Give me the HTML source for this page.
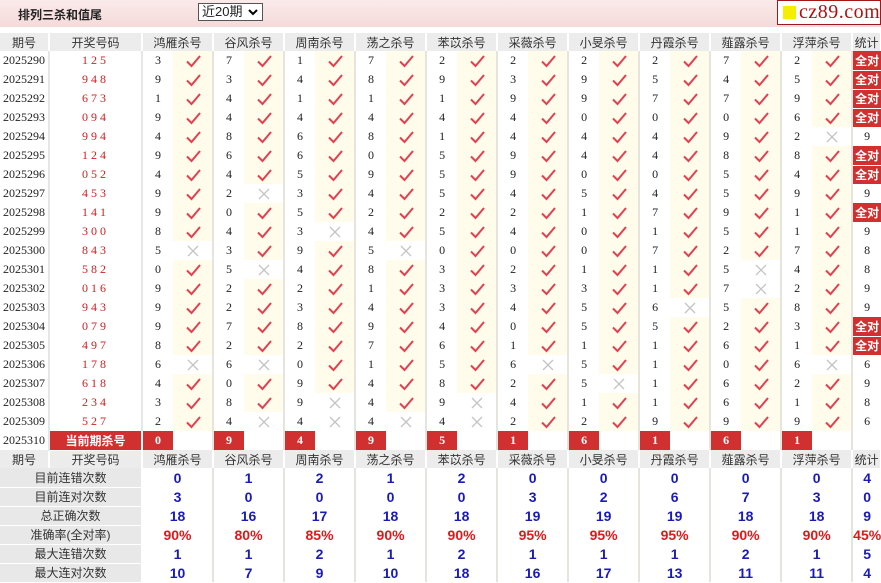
<!DOCTYPE html>
<html><head><meta charset="utf-8">
<style>
*{margin:0;padding:0;box-sizing:border-box}
body{width:881px;height:581px;overflow:hidden;background:#fff;font-family:"Liberation Sans","Noto Sans CJK SC",sans-serif;font-size:12px;color:#222;position:relative}
.top{position:absolute;left:0;top:0;width:881px;height:27px;background:linear-gradient(#fbeaea,#f5dada);}
.ttl{position:absolute;left:18px;top:6px;font-weight:bold;font-size:12px;color:#222}
.sel{position:absolute;left:198px;top:3px;width:65px;height:18px;border:1px solid #555;background:#fff;font-size:13px;line-height:16px;padding-left:3px}
.sel svg{position:absolute;right:4px;top:5px}
.logo{position:absolute;left:777px;top:0;width:104px;height:25px;border:1px solid #a01818;background:#fff;}
.logo i{position:absolute;left:5px;top:5px;width:13px;height:13px;background:#f5ee00}
.logo b{position:absolute;left:21px;top:0;font-family:"Liberation Serif",serif;font-weight:normal;font-size:20px;color:#b01010;letter-spacing:0.5px}
table{position:absolute;left:0;top:33px;border-collapse:collapse;table-layout:fixed;width:881px}
td{height:19px;padding:0;text-align:center;vertical-align:middle;white-space:nowrap;overflow:hidden}
tr.h td{height:18px;background:#ececec;color:#333;border-right:2px solid #fff}
td.p{font-family:"Liberation Serif",serif;font-size:12px;border-right:2px solid #e6e6e6}
td.d{color:#d02020;font-family:"Liberation Serif",serif;letter-spacing:3px;border-right:2px solid #e6e6e6}
td.n{font-family:"Liberation Serif",serif}
td.k{background:#fffcec;border-right:2px solid #e6e4dc}
td.x{background:#fff;border-right:2px solid #e6e4dc}
td.k svg,td.x svg{display:block;margin:0 auto}
td.s{font-family:"Liberation Serif",serif}
td.a{background:#d0302f;color:#fff;font-weight:bold;border-bottom:1px solid #fff}
td.r{background:#d0302f;color:#fff;font-weight:bold;font-family:"Liberation Serif",serif}
td.w{border-right:2px solid #e6e4dc}
td.lab{background:#e8e8e8;color:#333;border-right:2px solid #fff;border-bottom:1px solid #fff}
td.v{color:#1a1ab8;font-weight:bold;font-size:14px;border-right:2px solid #e6e4dc}
td.pc{color:#e01818;font-weight:bold;font-size:14px;border-right:2px solid #e6e4dc}
</style></head><body>
<svg width="0" height="0" style="position:absolute"><defs>
<g id="c"><path d="M2 8.5 L6.5 13 L15 3" fill="none" stroke="#e2404f" stroke-width="2"/></g>
<g id="x"><path d="M3 3 L13 13 M13 3 L3 13" fill="none" stroke="#c4c4c4" stroke-width="1.3"/></g>
</defs></svg>
<div class="top"></div>
<div class="ttl">排列三杀和值尾</div>
<div class="sel">近20期<svg width="10" height="8"><path d="M1 1 L5 5 L9 1" fill="none" stroke="#000" stroke-width="2"/></svg></div>
<div class="logo"><i></i><b>cz89.com</b></div>
<table>
<colgroup><col style="width:49px"><col style="width:93px">
<col style="width:31px"><col style="width:40px"><col style="width:31px"><col style="width:40px"><col style="width:31px"><col style="width:40px"><col style="width:31px"><col style="width:40px"><col style="width:31px"><col style="width:40px"><col style="width:31px"><col style="width:40px"><col style="width:31px"><col style="width:40px"><col style="width:31px"><col style="width:40px"><col style="width:31px"><col style="width:40px"><col style="width:31px"><col style="width:40px">
<col style="width:29px"></colgroup>
<tr class="h"><td>期号</td><td>开奖号码</td><td colspan="2">鸿雁杀号</td><td colspan="2">谷风杀号</td><td colspan="2">周南杀号</td><td colspan="2">荡之杀号</td><td colspan="2">苯苡杀号</td><td colspan="2">采薇杀号</td><td colspan="2">小旻杀号</td><td colspan="2">丹霞杀号</td><td colspan="2">薤露杀号</td><td colspan="2">浮萍杀号</td><td>统计</td></tr>
<tr><td class="p">2025290</td><td class="d">125</td><td class="n">3</td><td class="k"><svg width="16" height="16"><use href="#c"/></svg></td><td class="n">7</td><td class="k"><svg width="16" height="16"><use href="#c"/></svg></td><td class="n">1</td><td class="k"><svg width="16" height="16"><use href="#c"/></svg></td><td class="n">7</td><td class="k"><svg width="16" height="16"><use href="#c"/></svg></td><td class="n">2</td><td class="k"><svg width="16" height="16"><use href="#c"/></svg></td><td class="n">2</td><td class="k"><svg width="16" height="16"><use href="#c"/></svg></td><td class="n">2</td><td class="k"><svg width="16" height="16"><use href="#c"/></svg></td><td class="n">2</td><td class="k"><svg width="16" height="16"><use href="#c"/></svg></td><td class="n">7</td><td class="k"><svg width="16" height="16"><use href="#c"/></svg></td><td class="n">2</td><td class="k"><svg width="16" height="16"><use href="#c"/></svg></td><td class="a">全对</td></tr>
<tr><td class="p">2025291</td><td class="d">948</td><td class="n">9</td><td class="k"><svg width="16" height="16"><use href="#c"/></svg></td><td class="n">3</td><td class="k"><svg width="16" height="16"><use href="#c"/></svg></td><td class="n">4</td><td class="k"><svg width="16" height="16"><use href="#c"/></svg></td><td class="n">8</td><td class="k"><svg width="16" height="16"><use href="#c"/></svg></td><td class="n">9</td><td class="k"><svg width="16" height="16"><use href="#c"/></svg></td><td class="n">3</td><td class="k"><svg width="16" height="16"><use href="#c"/></svg></td><td class="n">9</td><td class="k"><svg width="16" height="16"><use href="#c"/></svg></td><td class="n">5</td><td class="k"><svg width="16" height="16"><use href="#c"/></svg></td><td class="n">4</td><td class="k"><svg width="16" height="16"><use href="#c"/></svg></td><td class="n">5</td><td class="k"><svg width="16" height="16"><use href="#c"/></svg></td><td class="a">全对</td></tr>
<tr><td class="p">2025292</td><td class="d">673</td><td class="n">1</td><td class="k"><svg width="16" height="16"><use href="#c"/></svg></td><td class="n">4</td><td class="k"><svg width="16" height="16"><use href="#c"/></svg></td><td class="n">1</td><td class="k"><svg width="16" height="16"><use href="#c"/></svg></td><td class="n">1</td><td class="k"><svg width="16" height="16"><use href="#c"/></svg></td><td class="n">1</td><td class="k"><svg width="16" height="16"><use href="#c"/></svg></td><td class="n">9</td><td class="k"><svg width="16" height="16"><use href="#c"/></svg></td><td class="n">9</td><td class="k"><svg width="16" height="16"><use href="#c"/></svg></td><td class="n">7</td><td class="k"><svg width="16" height="16"><use href="#c"/></svg></td><td class="n">7</td><td class="k"><svg width="16" height="16"><use href="#c"/></svg></td><td class="n">9</td><td class="k"><svg width="16" height="16"><use href="#c"/></svg></td><td class="a">全对</td></tr>
<tr><td class="p">2025293</td><td class="d">094</td><td class="n">9</td><td class="k"><svg width="16" height="16"><use href="#c"/></svg></td><td class="n">4</td><td class="k"><svg width="16" height="16"><use href="#c"/></svg></td><td class="n">4</td><td class="k"><svg width="16" height="16"><use href="#c"/></svg></td><td class="n">4</td><td class="k"><svg width="16" height="16"><use href="#c"/></svg></td><td class="n">4</td><td class="k"><svg width="16" height="16"><use href="#c"/></svg></td><td class="n">4</td><td class="k"><svg width="16" height="16"><use href="#c"/></svg></td><td class="n">0</td><td class="k"><svg width="16" height="16"><use href="#c"/></svg></td><td class="n">0</td><td class="k"><svg width="16" height="16"><use href="#c"/></svg></td><td class="n">0</td><td class="k"><svg width="16" height="16"><use href="#c"/></svg></td><td class="n">6</td><td class="k"><svg width="16" height="16"><use href="#c"/></svg></td><td class="a">全对</td></tr>
<tr><td class="p">2025294</td><td class="d">994</td><td class="n">4</td><td class="k"><svg width="16" height="16"><use href="#c"/></svg></td><td class="n">8</td><td class="k"><svg width="16" height="16"><use href="#c"/></svg></td><td class="n">6</td><td class="k"><svg width="16" height="16"><use href="#c"/></svg></td><td class="n">8</td><td class="k"><svg width="16" height="16"><use href="#c"/></svg></td><td class="n">1</td><td class="k"><svg width="16" height="16"><use href="#c"/></svg></td><td class="n">4</td><td class="k"><svg width="16" height="16"><use href="#c"/></svg></td><td class="n">4</td><td class="k"><svg width="16" height="16"><use href="#c"/></svg></td><td class="n">4</td><td class="k"><svg width="16" height="16"><use href="#c"/></svg></td><td class="n">9</td><td class="k"><svg width="16" height="16"><use href="#c"/></svg></td><td class="n">2</td><td class="x"><svg width="16" height="16"><use href="#x"/></svg></td><td class="s">9</td></tr>
<tr><td class="p">2025295</td><td class="d">124</td><td class="n">9</td><td class="k"><svg width="16" height="16"><use href="#c"/></svg></td><td class="n">6</td><td class="k"><svg width="16" height="16"><use href="#c"/></svg></td><td class="n">6</td><td class="k"><svg width="16" height="16"><use href="#c"/></svg></td><td class="n">0</td><td class="k"><svg width="16" height="16"><use href="#c"/></svg></td><td class="n">5</td><td class="k"><svg width="16" height="16"><use href="#c"/></svg></td><td class="n">9</td><td class="k"><svg width="16" height="16"><use href="#c"/></svg></td><td class="n">4</td><td class="k"><svg width="16" height="16"><use href="#c"/></svg></td><td class="n">4</td><td class="k"><svg width="16" height="16"><use href="#c"/></svg></td><td class="n">8</td><td class="k"><svg width="16" height="16"><use href="#c"/></svg></td><td class="n">8</td><td class="k"><svg width="16" height="16"><use href="#c"/></svg></td><td class="a">全对</td></tr>
<tr><td class="p">2025296</td><td class="d">052</td><td class="n">4</td><td class="k"><svg width="16" height="16"><use href="#c"/></svg></td><td class="n">4</td><td class="k"><svg width="16" height="16"><use href="#c"/></svg></td><td class="n">5</td><td class="k"><svg width="16" height="16"><use href="#c"/></svg></td><td class="n">9</td><td class="k"><svg width="16" height="16"><use href="#c"/></svg></td><td class="n">5</td><td class="k"><svg width="16" height="16"><use href="#c"/></svg></td><td class="n">9</td><td class="k"><svg width="16" height="16"><use href="#c"/></svg></td><td class="n">0</td><td class="k"><svg width="16" height="16"><use href="#c"/></svg></td><td class="n">0</td><td class="k"><svg width="16" height="16"><use href="#c"/></svg></td><td class="n">5</td><td class="k"><svg width="16" height="16"><use href="#c"/></svg></td><td class="n">4</td><td class="k"><svg width="16" height="16"><use href="#c"/></svg></td><td class="a">全对</td></tr>
<tr><td class="p">2025297</td><td class="d">453</td><td class="n">9</td><td class="k"><svg width="16" height="16"><use href="#c"/></svg></td><td class="n">2</td><td class="x"><svg width="16" height="16"><use href="#x"/></svg></td><td class="n">3</td><td class="k"><svg width="16" height="16"><use href="#c"/></svg></td><td class="n">4</td><td class="k"><svg width="16" height="16"><use href="#c"/></svg></td><td class="n">5</td><td class="k"><svg width="16" height="16"><use href="#c"/></svg></td><td class="n">4</td><td class="k"><svg width="16" height="16"><use href="#c"/></svg></td><td class="n">5</td><td class="k"><svg width="16" height="16"><use href="#c"/></svg></td><td class="n">4</td><td class="k"><svg width="16" height="16"><use href="#c"/></svg></td><td class="n">5</td><td class="k"><svg width="16" height="16"><use href="#c"/></svg></td><td class="n">9</td><td class="k"><svg width="16" height="16"><use href="#c"/></svg></td><td class="s">9</td></tr>
<tr><td class="p">2025298</td><td class="d">141</td><td class="n">9</td><td class="k"><svg width="16" height="16"><use href="#c"/></svg></td><td class="n">0</td><td class="k"><svg width="16" height="16"><use href="#c"/></svg></td><td class="n">5</td><td class="k"><svg width="16" height="16"><use href="#c"/></svg></td><td class="n">2</td><td class="k"><svg width="16" height="16"><use href="#c"/></svg></td><td class="n">2</td><td class="k"><svg width="16" height="16"><use href="#c"/></svg></td><td class="n">2</td><td class="k"><svg width="16" height="16"><use href="#c"/></svg></td><td class="n">1</td><td class="k"><svg width="16" height="16"><use href="#c"/></svg></td><td class="n">7</td><td class="k"><svg width="16" height="16"><use href="#c"/></svg></td><td class="n">9</td><td class="k"><svg width="16" height="16"><use href="#c"/></svg></td><td class="n">1</td><td class="k"><svg width="16" height="16"><use href="#c"/></svg></td><td class="a">全对</td></tr>
<tr><td class="p">2025299</td><td class="d">300</td><td class="n">8</td><td class="k"><svg width="16" height="16"><use href="#c"/></svg></td><td class="n">4</td><td class="k"><svg width="16" height="16"><use href="#c"/></svg></td><td class="n">3</td><td class="x"><svg width="16" height="16"><use href="#x"/></svg></td><td class="n">4</td><td class="k"><svg width="16" height="16"><use href="#c"/></svg></td><td class="n">5</td><td class="k"><svg width="16" height="16"><use href="#c"/></svg></td><td class="n">4</td><td class="k"><svg width="16" height="16"><use href="#c"/></svg></td><td class="n">0</td><td class="k"><svg width="16" height="16"><use href="#c"/></svg></td><td class="n">1</td><td class="k"><svg width="16" height="16"><use href="#c"/></svg></td><td class="n">5</td><td class="k"><svg width="16" height="16"><use href="#c"/></svg></td><td class="n">1</td><td class="k"><svg width="16" height="16"><use href="#c"/></svg></td><td class="s">9</td></tr>
<tr><td class="p">2025300</td><td class="d">843</td><td class="n">5</td><td class="x"><svg width="16" height="16"><use href="#x"/></svg></td><td class="n">3</td><td class="k"><svg width="16" height="16"><use href="#c"/></svg></td><td class="n">9</td><td class="k"><svg width="16" height="16"><use href="#c"/></svg></td><td class="n">5</td><td class="x"><svg width="16" height="16"><use href="#x"/></svg></td><td class="n">0</td><td class="k"><svg width="16" height="16"><use href="#c"/></svg></td><td class="n">0</td><td class="k"><svg width="16" height="16"><use href="#c"/></svg></td><td class="n">0</td><td class="k"><svg width="16" height="16"><use href="#c"/></svg></td><td class="n">7</td><td class="k"><svg width="16" height="16"><use href="#c"/></svg></td><td class="n">2</td><td class="k"><svg width="16" height="16"><use href="#c"/></svg></td><td class="n">7</td><td class="k"><svg width="16" height="16"><use href="#c"/></svg></td><td class="s">8</td></tr>
<tr><td class="p">2025301</td><td class="d">582</td><td class="n">0</td><td class="k"><svg width="16" height="16"><use href="#c"/></svg></td><td class="n">5</td><td class="x"><svg width="16" height="16"><use href="#x"/></svg></td><td class="n">4</td><td class="k"><svg width="16" height="16"><use href="#c"/></svg></td><td class="n">8</td><td class="k"><svg width="16" height="16"><use href="#c"/></svg></td><td class="n">3</td><td class="k"><svg width="16" height="16"><use href="#c"/></svg></td><td class="n">2</td><td class="k"><svg width="16" height="16"><use href="#c"/></svg></td><td class="n">1</td><td class="k"><svg width="16" height="16"><use href="#c"/></svg></td><td class="n">1</td><td class="k"><svg width="16" height="16"><use href="#c"/></svg></td><td class="n">5</td><td class="x"><svg width="16" height="16"><use href="#x"/></svg></td><td class="n">4</td><td class="k"><svg width="16" height="16"><use href="#c"/></svg></td><td class="s">8</td></tr>
<tr><td class="p">2025302</td><td class="d">016</td><td class="n">9</td><td class="k"><svg width="16" height="16"><use href="#c"/></svg></td><td class="n">2</td><td class="k"><svg width="16" height="16"><use href="#c"/></svg></td><td class="n">2</td><td class="k"><svg width="16" height="16"><use href="#c"/></svg></td><td class="n">1</td><td class="k"><svg width="16" height="16"><use href="#c"/></svg></td><td class="n">3</td><td class="k"><svg width="16" height="16"><use href="#c"/></svg></td><td class="n">3</td><td class="k"><svg width="16" height="16"><use href="#c"/></svg></td><td class="n">3</td><td class="k"><svg width="16" height="16"><use href="#c"/></svg></td><td class="n">1</td><td class="k"><svg width="16" height="16"><use href="#c"/></svg></td><td class="n">7</td><td class="x"><svg width="16" height="16"><use href="#x"/></svg></td><td class="n">2</td><td class="k"><svg width="16" height="16"><use href="#c"/></svg></td><td class="s">9</td></tr>
<tr><td class="p">2025303</td><td class="d">943</td><td class="n">9</td><td class="k"><svg width="16" height="16"><use href="#c"/></svg></td><td class="n">2</td><td class="k"><svg width="16" height="16"><use href="#c"/></svg></td><td class="n">3</td><td class="k"><svg width="16" height="16"><use href="#c"/></svg></td><td class="n">4</td><td class="k"><svg width="16" height="16"><use href="#c"/></svg></td><td class="n">3</td><td class="k"><svg width="16" height="16"><use href="#c"/></svg></td><td class="n">4</td><td class="k"><svg width="16" height="16"><use href="#c"/></svg></td><td class="n">5</td><td class="k"><svg width="16" height="16"><use href="#c"/></svg></td><td class="n">6</td><td class="x"><svg width="16" height="16"><use href="#x"/></svg></td><td class="n">5</td><td class="k"><svg width="16" height="16"><use href="#c"/></svg></td><td class="n">8</td><td class="k"><svg width="16" height="16"><use href="#c"/></svg></td><td class="s">9</td></tr>
<tr><td class="p">2025304</td><td class="d">079</td><td class="n">9</td><td class="k"><svg width="16" height="16"><use href="#c"/></svg></td><td class="n">7</td><td class="k"><svg width="16" height="16"><use href="#c"/></svg></td><td class="n">8</td><td class="k"><svg width="16" height="16"><use href="#c"/></svg></td><td class="n">9</td><td class="k"><svg width="16" height="16"><use href="#c"/></svg></td><td class="n">4</td><td class="k"><svg width="16" height="16"><use href="#c"/></svg></td><td class="n">0</td><td class="k"><svg width="16" height="16"><use href="#c"/></svg></td><td class="n">5</td><td class="k"><svg width="16" height="16"><use href="#c"/></svg></td><td class="n">5</td><td class="k"><svg width="16" height="16"><use href="#c"/></svg></td><td class="n">2</td><td class="k"><svg width="16" height="16"><use href="#c"/></svg></td><td class="n">3</td><td class="k"><svg width="16" height="16"><use href="#c"/></svg></td><td class="a">全对</td></tr>
<tr><td class="p">2025305</td><td class="d">497</td><td class="n">8</td><td class="k"><svg width="16" height="16"><use href="#c"/></svg></td><td class="n">2</td><td class="k"><svg width="16" height="16"><use href="#c"/></svg></td><td class="n">2</td><td class="k"><svg width="16" height="16"><use href="#c"/></svg></td><td class="n">7</td><td class="k"><svg width="16" height="16"><use href="#c"/></svg></td><td class="n">6</td><td class="k"><svg width="16" height="16"><use href="#c"/></svg></td><td class="n">1</td><td class="k"><svg width="16" height="16"><use href="#c"/></svg></td><td class="n">1</td><td class="k"><svg width="16" height="16"><use href="#c"/></svg></td><td class="n">1</td><td class="k"><svg width="16" height="16"><use href="#c"/></svg></td><td class="n">6</td><td class="k"><svg width="16" height="16"><use href="#c"/></svg></td><td class="n">1</td><td class="k"><svg width="16" height="16"><use href="#c"/></svg></td><td class="a">全对</td></tr>
<tr><td class="p">2025306</td><td class="d">178</td><td class="n">6</td><td class="x"><svg width="16" height="16"><use href="#x"/></svg></td><td class="n">6</td><td class="x"><svg width="16" height="16"><use href="#x"/></svg></td><td class="n">0</td><td class="k"><svg width="16" height="16"><use href="#c"/></svg></td><td class="n">1</td><td class="k"><svg width="16" height="16"><use href="#c"/></svg></td><td class="n">5</td><td class="k"><svg width="16" height="16"><use href="#c"/></svg></td><td class="n">6</td><td class="x"><svg width="16" height="16"><use href="#x"/></svg></td><td class="n">5</td><td class="k"><svg width="16" height="16"><use href="#c"/></svg></td><td class="n">1</td><td class="k"><svg width="16" height="16"><use href="#c"/></svg></td><td class="n">0</td><td class="k"><svg width="16" height="16"><use href="#c"/></svg></td><td class="n">6</td><td class="x"><svg width="16" height="16"><use href="#x"/></svg></td><td class="s">6</td></tr>
<tr><td class="p">2025307</td><td class="d">618</td><td class="n">4</td><td class="k"><svg width="16" height="16"><use href="#c"/></svg></td><td class="n">0</td><td class="k"><svg width="16" height="16"><use href="#c"/></svg></td><td class="n">9</td><td class="k"><svg width="16" height="16"><use href="#c"/></svg></td><td class="n">4</td><td class="k"><svg width="16" height="16"><use href="#c"/></svg></td><td class="n">8</td><td class="k"><svg width="16" height="16"><use href="#c"/></svg></td><td class="n">2</td><td class="k"><svg width="16" height="16"><use href="#c"/></svg></td><td class="n">5</td><td class="x"><svg width="16" height="16"><use href="#x"/></svg></td><td class="n">1</td><td class="k"><svg width="16" height="16"><use href="#c"/></svg></td><td class="n">6</td><td class="k"><svg width="16" height="16"><use href="#c"/></svg></td><td class="n">2</td><td class="k"><svg width="16" height="16"><use href="#c"/></svg></td><td class="s">9</td></tr>
<tr><td class="p">2025308</td><td class="d">234</td><td class="n">3</td><td class="k"><svg width="16" height="16"><use href="#c"/></svg></td><td class="n">8</td><td class="k"><svg width="16" height="16"><use href="#c"/></svg></td><td class="n">9</td><td class="x"><svg width="16" height="16"><use href="#x"/></svg></td><td class="n">4</td><td class="k"><svg width="16" height="16"><use href="#c"/></svg></td><td class="n">9</td><td class="x"><svg width="16" height="16"><use href="#x"/></svg></td><td class="n">4</td><td class="k"><svg width="16" height="16"><use href="#c"/></svg></td><td class="n">1</td><td class="k"><svg width="16" height="16"><use href="#c"/></svg></td><td class="n">1</td><td class="k"><svg width="16" height="16"><use href="#c"/></svg></td><td class="n">6</td><td class="k"><svg width="16" height="16"><use href="#c"/></svg></td><td class="n">1</td><td class="k"><svg width="16" height="16"><use href="#c"/></svg></td><td class="s">8</td></tr>
<tr><td class="p">2025309</td><td class="d">527</td><td class="n">2</td><td class="k"><svg width="16" height="16"><use href="#c"/></svg></td><td class="n">4</td><td class="x"><svg width="16" height="16"><use href="#x"/></svg></td><td class="n">4</td><td class="x"><svg width="16" height="16"><use href="#x"/></svg></td><td class="n">4</td><td class="x"><svg width="16" height="16"><use href="#x"/></svg></td><td class="n">4</td><td class="x"><svg width="16" height="16"><use href="#x"/></svg></td><td class="n">2</td><td class="k"><svg width="16" height="16"><use href="#c"/></svg></td><td class="n">2</td><td class="k"><svg width="16" height="16"><use href="#c"/></svg></td><td class="n">9</td><td class="k"><svg width="16" height="16"><use href="#c"/></svg></td><td class="n">9</td><td class="k"><svg width="16" height="16"><use href="#c"/></svg></td><td class="n">9</td><td class="k"><svg width="16" height="16"><use href="#c"/></svg></td><td class="s">6</td></tr>
<tr><td class="p">2025310</td><td class="a" style="border-right:2px solid #fff">当前期杀号</td><td class="r">0</td><td class="w"></td><td class="r">9</td><td class="w"></td><td class="r">4</td><td class="w"></td><td class="r">9</td><td class="w"></td><td class="r">5</td><td class="w"></td><td class="r">1</td><td class="w"></td><td class="r">6</td><td class="w"></td><td class="r">1</td><td class="w"></td><td class="r">6</td><td class="w"></td><td class="r">1</td><td class="w"></td><td></td></tr>
<tr class="h"><td>期号</td><td>开奖号码</td><td colspan="2">鸿雁杀号</td><td colspan="2">谷风杀号</td><td colspan="2">周南杀号</td><td colspan="2">荡之杀号</td><td colspan="2">苯苡杀号</td><td colspan="2">采薇杀号</td><td colspan="2">小旻杀号</td><td colspan="2">丹霞杀号</td><td colspan="2">薤露杀号</td><td colspan="2">浮萍杀号</td><td>统计</td></tr>
<tr><td class="lab" colspan="2">目前连错次数</td><td class="v" colspan="2">0</td><td class="v" colspan="2">1</td><td class="v" colspan="2">2</td><td class="v" colspan="2">1</td><td class="v" colspan="2">2</td><td class="v" colspan="2">0</td><td class="v" colspan="2">0</td><td class="v" colspan="2">0</td><td class="v" colspan="2">0</td><td class="v" colspan="2">0</td><td class="v" style="border:0">4</td></tr>
<tr><td class="lab" colspan="2">目前连对次数</td><td class="v" colspan="2">3</td><td class="v" colspan="2">0</td><td class="v" colspan="2">0</td><td class="v" colspan="2">0</td><td class="v" colspan="2">0</td><td class="v" colspan="2">3</td><td class="v" colspan="2">2</td><td class="v" colspan="2">6</td><td class="v" colspan="2">7</td><td class="v" colspan="2">3</td><td class="v" style="border:0">0</td></tr>
<tr><td class="lab" colspan="2">总正确次数</td><td class="v" colspan="2">18</td><td class="v" colspan="2">16</td><td class="v" colspan="2">17</td><td class="v" colspan="2">18</td><td class="v" colspan="2">18</td><td class="v" colspan="2">19</td><td class="v" colspan="2">19</td><td class="v" colspan="2">19</td><td class="v" colspan="2">18</td><td class="v" colspan="2">18</td><td class="v" style="border:0">9</td></tr>
<tr><td class="lab" colspan="2">准确率(全对率)</td><td class="pc" colspan="2">90%</td><td class="pc" colspan="2">80%</td><td class="pc" colspan="2">85%</td><td class="pc" colspan="2">90%</td><td class="pc" colspan="2">90%</td><td class="pc" colspan="2">95%</td><td class="pc" colspan="2">95%</td><td class="pc" colspan="2">95%</td><td class="pc" colspan="2">90%</td><td class="pc" colspan="2">90%</td><td class="pc" style="border:0">45%</td></tr>
<tr><td class="lab" colspan="2">最大连错次数</td><td class="v" colspan="2">1</td><td class="v" colspan="2">1</td><td class="v" colspan="2">2</td><td class="v" colspan="2">1</td><td class="v" colspan="2">2</td><td class="v" colspan="2">1</td><td class="v" colspan="2">1</td><td class="v" colspan="2">1</td><td class="v" colspan="2">2</td><td class="v" colspan="2">1</td><td class="v" style="border:0">5</td></tr>
<tr><td class="lab" colspan="2">最大连对次数</td><td class="v" colspan="2">10</td><td class="v" colspan="2">7</td><td class="v" colspan="2">9</td><td class="v" colspan="2">10</td><td class="v" colspan="2">18</td><td class="v" colspan="2">16</td><td class="v" colspan="2">17</td><td class="v" colspan="2">13</td><td class="v" colspan="2">11</td><td class="v" colspan="2">11</td><td class="v" style="border:0">4</td></tr>
</table>
</body></html>
